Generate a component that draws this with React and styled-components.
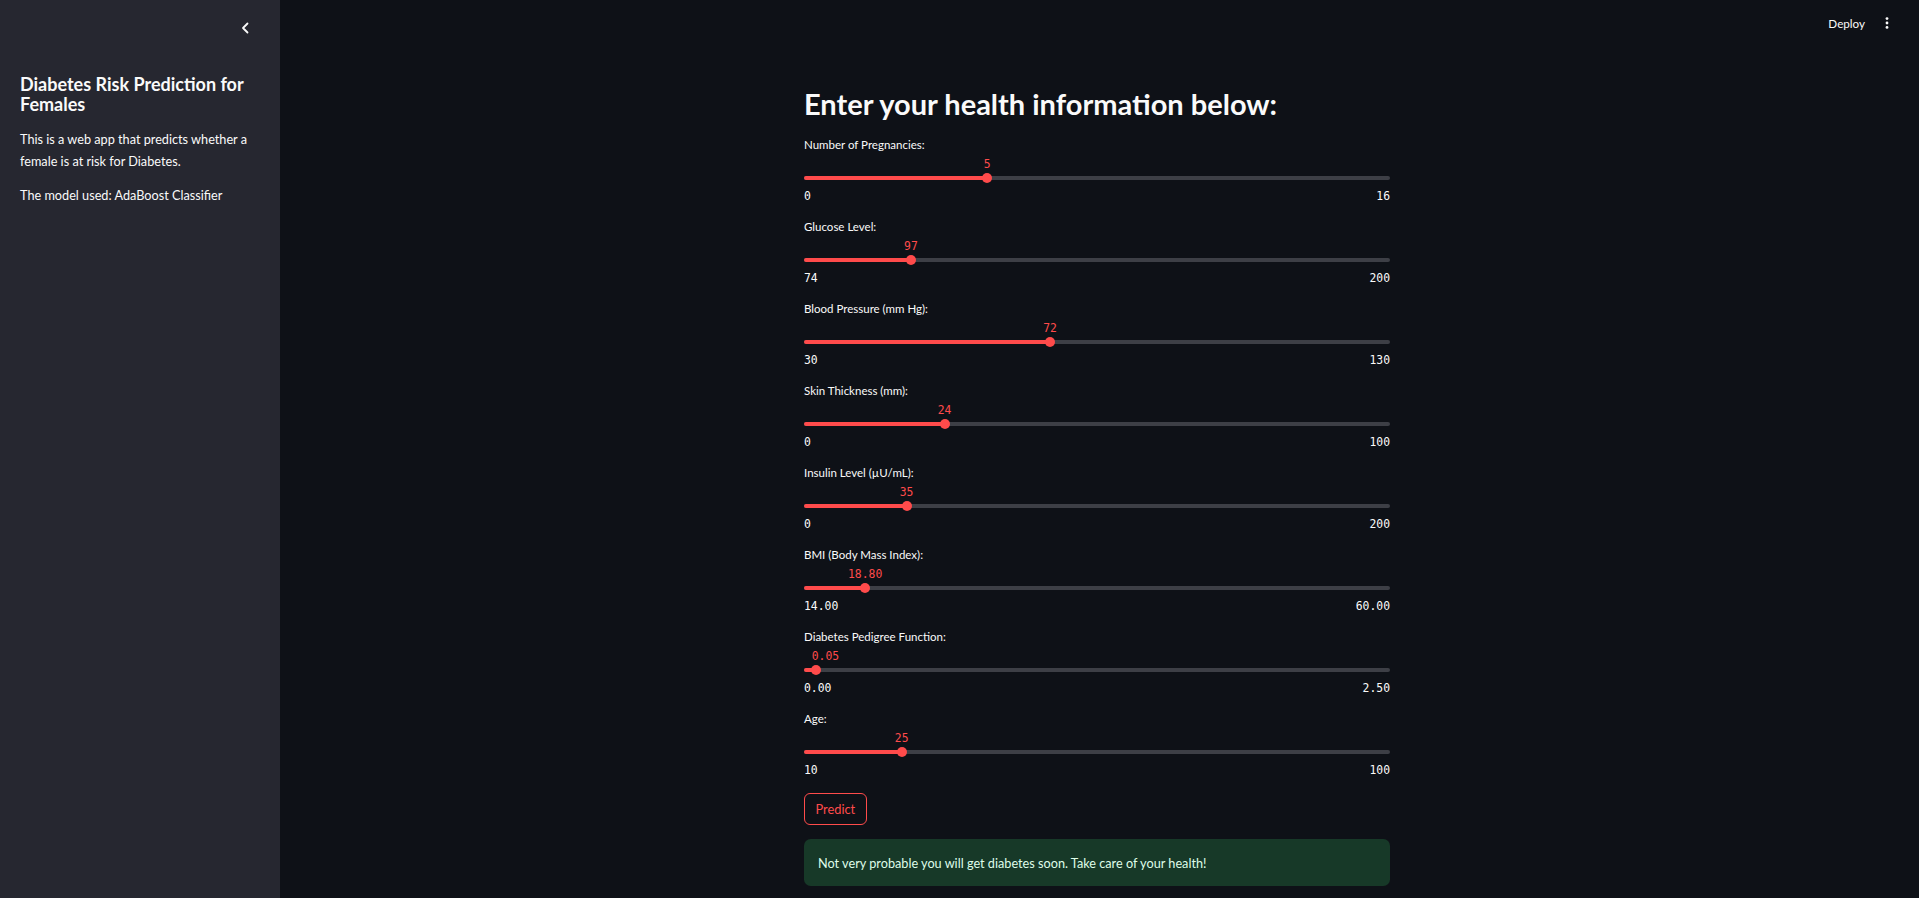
import React from "react";
import styled, { createGlobalStyle } from "styled-components";

const GlobalStyle = createGlobalStyle`
  html, body {
    margin: 0;
    padding: 0;
    background: #0e1117;
    color: #fafafa;
    font-family: Lato, "Noto Sans", sans-serif;
  }
  * { box-sizing: border-box; }
`;

const fields = [
  { label: "Number of Pregnancies:", value: 5, min: 0, max: 16, digits: 0 },
  { label: "Glucose Level:", value: 97, min: 74, max: 200, digits: 0 },
  { label: "Blood Pressure (mm Hg):", value: 72, min: 30, max: 130, digits: 0 },
  { label: "Skin Thickness (mm):", value: 24, min: 0, max: 100, digits: 0 },
  { label: "Insulin Level (µU/mL):", value: 35, min: 0, max: 200, digits: 0 },
  { label: "BMI (Body Mass Index):", value: 18.8, min: 14, max: 60, digits: 2 },
  { label: "Diabetes Pedigree Function:", value: 0.05, min: 0, max: 2.5, digits: 2 },
  { label: "Age:", value: 25, min: 10, max: 100, digits: 0 },
];

function Slider({ label, value, min, max, digits }) {
  const pct = ((value - min) / (max - min)) * 100;
  return (
    <SliderBlock>
      <FieldLabel>{label}</FieldLabel>
      <TrackRow>
        <Track>
          <Filled style={{ width: `${pct}%` }} />
        </Track>
        <Thumb style={{ left: `${pct}%` }} />
        <ThumbValue style={{ left: `${pct}%` }} $edge={pct < 5}>
          {value.toFixed(digits)}
        </ThumbValue>
      </TrackRow>
      <Bounds>
        <span>{min.toFixed(digits)}</span>
        <span>{max.toFixed(digits)}</span>
      </Bounds>
    </SliderBlock>
  );
}

export default function App() {
  return (
    <Page>
      <GlobalStyle />
      <Sidebar>
        <SidebarTop>
          <CollapseButton>
            <svg width="20" height="20" viewBox="0 0 20 20" fill="none">
              <path d="M12.5 5.5 L8 10 L12.5 14.5" stroke="#fafafa" strokeWidth="1.8" strokeLinecap="round" strokeLinejoin="round" />
            </svg>
          </CollapseButton>
        </SidebarTop>
        <SidebarTitle>Diabetes Risk Prediction for Females</SidebarTitle>
        <SidebarText>This is a web app that predicts whether a female is at risk for Diabetes.</SidebarText>
        <SidebarText>The model used: AdaBoost Classifier</SidebarText>
      </Sidebar>
      <Main>
        <Toolbar>
          <DeployButton>Deploy</DeployButton>
          <MenuButton>
            <svg width="4" height="12" viewBox="0 0 4 12">
              <circle cx="2" cy="1.6" r="1.4" fill="#fafafa" />
              <circle cx="2" cy="6" r="1.4" fill="#fafafa" />
              <circle cx="2" cy="10.4" r="1.4" fill="#fafafa" />
            </svg>
          </MenuButton>
        </Toolbar>
        <Body>
          <Content>
            <Heading>Enter your health information below:</Heading>
            {fields.map((f) => (
              <Slider key={f.label} {...f} />
            ))}
            <PredictButton>Predict</PredictButton>
            <SuccessAlert>Not very probable you will get diabetes soon. Take care of your health!</SuccessAlert>
          </Content>
        </Body>
      </Main>
    </Page>
  );
}

const Page = styled.div`
  display: flex;
  height: 898px;
  overflow: hidden;
`;

const Sidebar = styled.aside`
  width: 280px;
  flex-shrink: 0;
  background: #262730;
  padding: 0 20px;
`;

const SidebarTop = styled.div`
  display: flex;
  justify-content: flex-end;
  padding-top: 18px;
  margin-right: 5px;
`;

const CollapseButton = styled.div`
  width: 20px;
  height: 20px;
  display: flex;
`;

const SidebarTitle = styled.h3`
  margin: 35.5px 0 0;
  font-size: 18px;
  line-height: 20.5px;
  font-weight: 700;
  color: #fafafa;
`;

const SidebarText = styled.p`
  margin: 13.5px 0 0;
  font-size: 12.7px;
  line-height: 22px;
  color: #fafafa;
  & + & {
    margin-top: 11.6px;
  }
`;

const Main = styled.main`
  flex: 1;
  display: flex;
  flex-direction: column;
`;

const Toolbar = styled.header`
  height: 46px;
  display: flex;
  justify-content: flex-end;
  align-items: center;
  gap: 20px;
  padding-right: 30px;
`;

const DeployButton = styled.span`
  font-size: 11.67px;
  color: #fafafa;
`;

const MenuButton = styled.span`
  display: flex;
`;

const Body = styled.div`
  padding-right: 5px;
`;

const Content = styled.div`
  width: 586px;
  margin: 0 auto;
`;

const Heading = styled.h2`
  margin: 41.4px 0 15px;
  font-size: 29px;
  line-height: 1.2;
  font-weight: 700;
  color: #fafafa;
`;

const SliderBlock = styled.div`
  margin-bottom: 16.2px;
`;

const FieldLabel = styled.div`
  font-size: 11.5px;
  line-height: 16px;
  color: #fafafa;
  margin-bottom: 13.8px;
`;

const TrackRow = styled.div`
  position: relative;
  height: 22px;
  display: flex;
  align-items: center;
`;

const Track = styled.div`
  width: 100%;
  height: 3.5px;
  border-radius: 2px;
  background: #3d3f46;
  overflow: hidden;
`;

const Filled = styled.div`
  height: 100%;
  background: #ff4b4b;
`;

const Thumb = styled.div`
  position: absolute;
  top: 50%;
  width: 10px;
  height: 10px;
  border-radius: 50%;
  background: #ff4b4b;
  transform: translate(-50%, -50%);
`;

const ThumbValue = styled.div`
  position: absolute;
  top: -10.3px;
  font-family: "DejaVu Sans Mono", "Liberation Mono", monospace;
  font-size: 11.4px;
  line-height: 14px;
  color: #ff4b4b;
  white-space: nowrap;
  transform: ${(p) => (p.$edge ? "translateX(-4px)" : "translateX(-50%)")};
`;

const Bounds = styled.div`
  display: flex;
  justify-content: space-between;
  font-family: "DejaVu Sans Mono", "Liberation Mono", monospace;
  font-size: 11.4px;
  line-height: 14px;
  color: #fafafa;
`;

const PredictButton = styled.button`
  display: block;
  height: 32px;
  padding: 0 10.5px;
  border: 1px solid #ff4b4b;
  border-radius: 6px;
  background: transparent;
  color: #ff4b4b;
  font-family: inherit;
  font-size: 12.8px;
`;

const SuccessAlert = styled.div`
  margin-top: 14px;
  height: 47px;
  display: flex;
  align-items: center;
  padding: 0 14px;
  border-radius: 6.67px;
  background: #173928;
  color: #dffde9;
  font-size: 12.7px;
`;
